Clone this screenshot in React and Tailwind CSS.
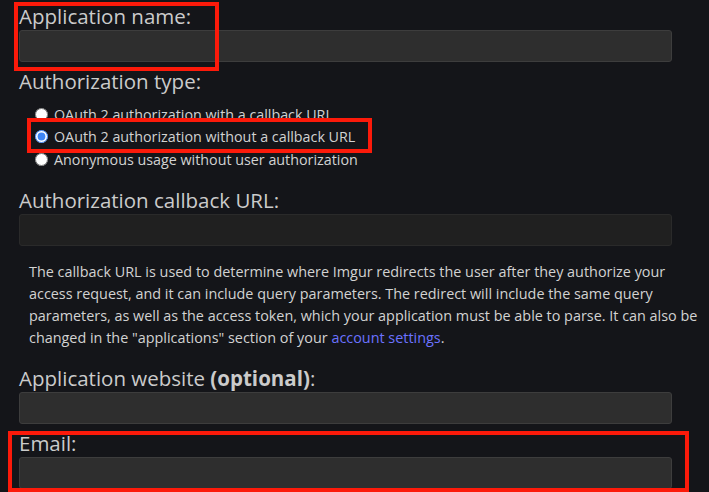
import React from "react";

const labelCls = "block text-[20.5px] leading-[28px] text-[#cbcbcb]";
const inputCls = "block w-[653px] h-8 rounded-[3px] border border-[#3d3d3d] bg-[#2e2e2e]";

function Radio({ checked, children }) {
  return (
    <label className="flex items-center h-[22.5px] pl-[35px] text-[14.3px] text-[#d2d2d2]">
      <input
        type="radio"
        name="authType"
        defaultChecked={checked}
        className="m-0 w-[13px] h-[13px] accent-[#3f86f4] mr-[6px]"
      />
      {children}
    </label>
  );
}

export default function App() {
  return (
    <div
      className="relative w-full h-[492px] overflow-hidden bg-[#141519] pl-[19px] pt-[2px]"
      style={{ fontFamily: '"Open Sans", "Noto Sans", sans-serif' }}
    >
      <label className={labelCls}>Application name:</label>
      <div className={inputCls} />

      <div className={labelCls + " mt-[5px]"}>Authorization type:</div>
      <div className="mt-[8px] -ml-[19px]">
        <Radio>OAuth 2 authorization with a callback URL</Radio>
        <Radio checked>OAuth 2 authorization without a callback URL</Radio>
        <Radio>Anonymous usage without user authorization</Radio>
      </div>

      <label className={labelCls + " mt-[15px]"}>Authorization callback URL:</label>
      <div className="block w-[653px] h-8 rounded-[3px] border border-[#2a2a2a] bg-[#202020]" />

      <p className="mt-[15px] ml-[10px] w-[680px] whitespace-nowrap text-[14.4px] leading-[22px] text-[#d2d2d2]">
        The callback URL is used to determine where Imgur redirects the user after they authorize your
        <br />
        access request, and it can include query parameters. The redirect will include the same query
        <br />
        parameters, as well as the access token, which your application must be able to parse. It can also be
        <br />
        changed in the "applications" section of your{" "}
        <a className="text-[#6b72ff]">account settings</a>.
      </p>

      <label className={labelCls + " mt-[15px]"}>
        Application website <span className="font-bold">(optional)</span>:
      </label>
      <div className={inputCls} />

      <label className={labelCls + " mt-[5px]"}>Email:</label>
      <div className={inputCls} />

      {/* annotation boxes */}
      <div className="absolute left-[14px] top-[2px] w-[205px] h-[69px] border-4 border-[#fc1a0a]" />
      <div className="absolute left-[27px] top-[118px] w-[345px] h-[35px] border-4 border-[#fc1a0a]" />
      <div className="absolute left-[8px] top-[431px] w-[681px] h-[61px] border-4 border-[#fc1a0a]" />
    </div>
  );
}
